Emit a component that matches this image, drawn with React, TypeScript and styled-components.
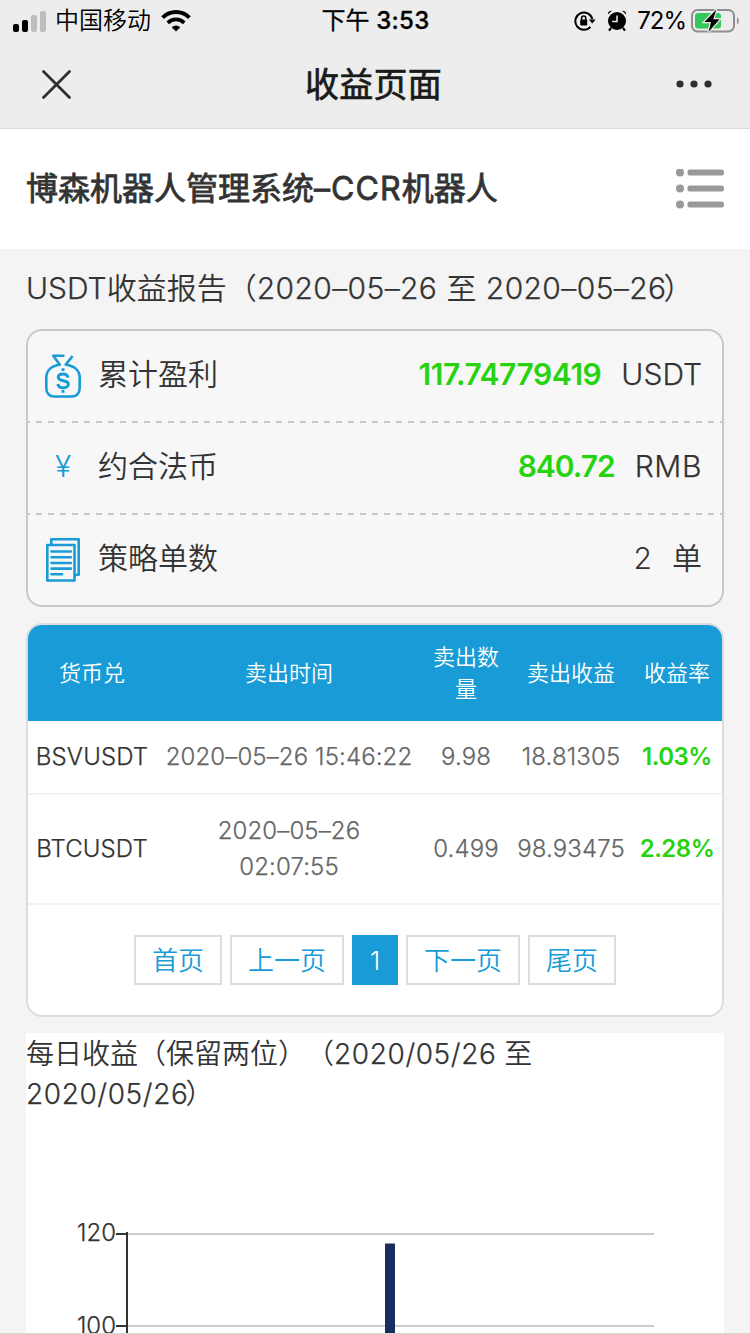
import React from "react";
import styled, { createGlobalStyle } from "styled-components";

const BLUE = "#189bd6";
const GREEN = "#27d30f";

const GlobalStyle = createGlobalStyle`
  * { box-sizing: border-box; }
  body {
    margin: 0;
    background: #f4f4f4;
    color: #333;
    font-family: Inter, "Noto Sans CJK SC", sans-serif;
    font-weight: 350;
    text-spacing-trim: space-all;
  }
`;

const Screen = styled.div`
  width: 750px;
  height: 1334px;
  overflow: hidden;
  display: flex;
  flex-direction: column;
  border-bottom: 1px solid #d6d6d6;
`;

/* A run of latin letters or digits with its own tracking. */
const Latin = styled.span<{ $track?: number }>`
  letter-spacing: ${(p) => p.$track ?? 0}px;
  -webkit-text-stroke: 0.25px currentColor;
`;

const ClosingParen = styled.span`
  margin-left: -3px;
`;

const TopBars = styled.header`
  flex: none;
  height: 129px;
  background: #ededed;
  border-bottom: 1px solid #d9d9d9;
`;

const StatusBar = styled.div`
  height: 40px;
  padding: 1px 11px 0 13px;
  display: grid;
  grid-template-columns: 1fr auto 1fr;
  align-items: center;
  color: #000;
  font-size: 24px;
  line-height: 39px;
`;

const StatusGroup = styled.div<{ $end?: boolean }>`
  display: flex;
  align-items: center;
  justify-content: ${(p) => (p.$end ? "flex-end" : "flex-start")};
  white-space: nowrap;
`;

const Carrier = styled.span`
  margin: 0 10px 0 8px;
`;

const Clock = styled.span`
  margin-right: 1px;
  font-weight: 400;
  white-space: nowrap;
  -webkit-text-stroke: 0.3px currentColor;
`;

const ClockDigits = styled.span`
  font-weight: 500;
  letter-spacing: 0.3px;
`;

const Percent = styled.span`
  margin: 0 5px 0 10px;
  font-weight: 400;
  letter-spacing: -1px;
`;

const NavBar = styled.div`
  height: 88px;
  padding: 0 36px 0 40px;
  display: grid;
  grid-template-columns: 1fr auto 1fr;
  align-items: center;
`;

const NavTitle = styled.h1`
  margin: 0 7px 0 0;
  padding-top: 1px;
  font-size: 34px;
  line-height: 48px;
  font-weight: 400;
  letter-spacing: 0.3px;
  color: #1a1a1a;
  -webkit-text-stroke: 0.7px currentColor;
`;

const NavEnd = styled.div`
  display: flex;
  justify-content: flex-end;
`;

const PageHead = styled.section`
  flex: none;
  height: 120px;
  padding: 0 26px;
  display: flex;
  align-items: center;
  justify-content: space-between;
  background: #fff;
`;

const SystemName = styled.h2`
  margin: 0;
  font-size: 32px;
  line-height: 48px;
  font-weight: 400;
  white-space: nowrap;
  -webkit-text-stroke: 0.8px currentColor;
`;

const SystemCode = styled.span`
  letter-spacing: 1.1px;
`;

const Content = styled.main`
  flex: none;
  padding: 0 26px;
  display: flex;
  flex-direction: column;
`;

const ReportTitle = styled.h3`
  margin: 0;
  height: 80px;
  font-size: 30px;
  line-height: 78px;
  font-weight: 350;
  word-spacing: 0.8px;
  white-space: nowrap;
`;

const Summary = styled.ul`
  margin: 0;
  padding: 0;
  list-style: none;
  border: 2px solid #c8c8c8;
  border-radius: 16px;
  background: #f7f7f7;
`;

const SummaryRow = styled.li`
  height: 92px;
  padding: 0 20px 7px 15px;
  display: flex;
  align-items: center;
  font-size: 30px;
  line-height: 80px;
  background: linear-gradient(90deg, #c8c8c8 6px, transparent 6px) -4px 100% / 12px 2px repeat-x;
  &:last-child {
    height: 90px;
    padding-bottom: 5px;
    background: none;
  }
`;

const IconBox = styled.span`
  width: 40px;
  height: 48px;
  margin: 5px 15px 0 0;
  display: flex;
  align-items: center;
  justify-content: center;
`;

const YenSign = styled.span`
  color: ${BLUE};
  font-size: 30px;
  line-height: 44px;
  padding-bottom: 4px;
`;

const Amount = styled.b<{ $plain?: boolean; $track?: number }>`
  margin-left: auto;
  margin-right: 20px;
  font-weight: ${(p) => (p.$plain ? 350 : 600)};
  letter-spacing: ${(p) => p.$track ?? 0}px;
  color: ${(p) => (p.$plain ? "#333" : GREEN)};
`;

const TableCard = styled.section`
  margin-top: 16px;
  border: 2px solid #ddd;
  border-radius: 16px;
  background: #fff;
  overflow: hidden;
`;

const Table = styled.table`
  width: 100%;
  table-layout: fixed;
  border-collapse: separate;
  border-spacing: 0;
  text-align: center;
`;

const HeadCell = styled.th<{ $w: number }>`
  width: ${(p) => p.$w}px;
  height: 96px;
  padding: 0 10px;
  background: ${BLUE};
  color: #fff;
  font-size: 22px;
  line-height: 32px;
  font-weight: 350;
`;

const Cell = styled.td<{ $h: number; $tone?: "name" | "rate" }>`
  height: ${(p) => p.$h}px;
  padding: 0;
  border-bottom: 2px solid #f2f2f2;
  font-size: 24px;
  line-height: 36px;
  letter-spacing: ${(p) => (p.$tone === "rate" ? -0.5 : 0.12)}px;
  white-space: pre-line;
  color: ${(p) => (p.$tone === "rate" ? GREEN : p.$tone === "name" ? "#333" : "#666")};
  font-weight: ${(p) => (p.$tone === "rate" ? 600 : 350)};
  -webkit-text-stroke: ${(p) => (p.$tone === "rate" ? 0 : 0.25)}px currentColor;
`;

const Pager = styled.nav`
  height: 110px;
  display: flex;
  align-items: center;
  justify-content: center;
  gap: 8px;
`;

const PageButton = styled.button<{ $current?: boolean }>`
  height: 50px;
  padding: 2px ${(p) => (p.$current ? 0 : 16)}px 0;
  width: ${(p) => (p.$current ? "46px" : "auto")};
  border: 2px solid ${(p) => (p.$current ? BLUE : "#ddd")};
  background: ${(p) => (p.$current ? BLUE : "#fff")};
  color: ${(p) => (p.$current ? "#fff" : BLUE)};
  font: inherit;
  font-size: 26px;
  line-height: 44px;
`;

const ChartCard = styled.section`
  margin-top: 16px;
  height: 320px;
  background: #fff;
`;

const ChartTitle = styled.h3`
  margin: 0;
  padding-top: 1px;
  height: 80px;
  font-size: 28px;
  line-height: 40px;
  font-weight: 350;
`;

const Chart = styled.svg`
  display: block;
  text { font-size: 24px; fill: #333; stroke: #333; stroke-width: 0.25px; }
`;

function SignalIcon() {
  return (
    <svg width="34" height="22" viewBox="0 0 34 22">
      <rect x="0" y="14" width="6" height="8" rx="2" />
      <rect x="9" y="10" width="6" height="12" rx="2" />
      <rect x="18" y="5" width="6" height="17" rx="2" fill="#bdbdbd" />
      <rect x="27" y="1" width="6" height="21" rx="2" fill="#bdbdbd" />
    </svg>
  );
}

function WifiIcon() {
  return (
    <svg width="30" height="22" viewBox="0 0 30 22" fill="none" stroke="#000">
      <path d="M1.6 7.6a19 19 0 0 1 26.8 0" strokeWidth="4" />
      <path d="M6.8 12.8a11.6 11.6 0 0 1 16.4 0" strokeWidth="3.8" />
      <path d="M15 21.6l-4.3-4.3a6.1 6.1 0 0 1 8.6 0z" fill="#000" stroke="none" />
    </svg>
  );
}

function RotationLockIcon() {
  return (
    <svg width="22" height="22" viewBox="0 0 22 22" fill="none" stroke="#000">
      <path d="M16.4 16.8A8.6 8.6 0 1 1 18.3 9" strokeWidth="2" />
      <path d="M14.8 9.4h6.8l-3.400 4z" fill="#000" stroke="none" />
      <rect x="6.2" y="9.6" width="7" height="5.8" rx="1" fill="#000" stroke="none" />
      <path d="M7.6 10V8.2a2.1 2.1 0 0 1 4.2 0V10" strokeWidth="1.5" />
    </svg>
  );
}

const AlarmSvg = styled.svg`
  margin-left: 11px;
`;

function AlarmIcon() {
  return (
    <AlarmSvg width="20" height="22" viewBox="0 0 20 22">
      <circle cx="10" cy="11" r="9" />
      <path d="M0.800 4.400A3.600 3.600 0 0 1 5 0.800zM19.200 4.400A3.600 3.600 0 0 0 15 0.800z" />
      <path d="M4 18l-2 2.600M16 18l2 2.600" stroke="#000" strokeWidth="2.200" />
      <path d="M10 5.600v6H5.200" fill="none" stroke="#ededed" strokeWidth="1.500" />
    </AlarmSvg>
  );
}

function BatteryIcon() {
  return (
    <svg width="48" height="24" viewBox="0 0 48 24">
      <rect x="1" y="1" width="42" height="21.4" rx="5.5" fill="none" stroke="#8e8e8e" strokeWidth="2" />
      <path d="M46 8.2c2.4 1 2.4 6 0 7z" fill="#8e8e8e" />
      <rect x="4" y="4" width="26" height="15.4" rx="3" fill="#34c759" />
      <path d="M25.4 0.4L13.400 13h6.600l-2.500 10L28.600 10.200h-6.400z" fill="#000" stroke="#ededed" strokeWidth="2.400" paintOrder="stroke" />
    </svg>
  );
}

function CloseIcon() {
  return (
    <svg width="33" height="33" viewBox="0 0 33 33" stroke="#2e2e2e" strokeWidth="2.8" strokeLinecap="round">
      <path d="M3.5 3.500l26 26M29.500 3.500l-26 26" />
    </svg>
  );
}

function MoreIcon() {
  return (
    <svg width="38" height="8" viewBox="0 0 38 8" fill="#2e2e2e">
      <circle cx="4" cy="4" r="3.6" />
      <circle cx="18" cy="4" r="3.6" />
      <circle cx="32" cy="4" r="3.6" />
    </svg>
  );
}

function ListIcon() {
  return (
    <svg width="48" height="40" viewBox="0 0 48 40" fill="#999">
      {[3.5, 19.5, 35.500].map((y) => (
        <React.Fragment key={y}>
          <circle cx="4" cy={y} r="4" />
          <rect x="11.500" y={y - 3} width="36.500" height="6" rx="2.600" />
        </React.Fragment>
      ))}
    </svg>
  );
}

function MoneyBagIcon() {
  return (
    <svg width="38" height="46" viewBox="0 0 38 46" fill="none" stroke={BLUE} strokeWidth="2.600" strokeLinejoin="round">
      <path d="M20.500 2.800H9.200l6.500 8.800C7.600 12.800 2.300 17.600 2.300 24.500V35c0 5.400 3.200 8.500 8 8.500h17.400c4.800 0 8-3.100 8-8.500V24.500c0-6.900-5.300-11.700-14-12.900L28.600 3" />
      <path d="M24 24.600c-.5-2.600-2.400-3.600-5-3.600-2.800 0-4.700 1.300-4.700 3.300 0 5 10.100 2 10.100 7 0 2.100-2.200 3.500-5.200 3.500-3 0-5-1.200-5.300-3.900" strokeWidth="3" />
      <path d="M19 15.200v2.800M19 37v2.800" strokeWidth="3" />
    </svg>
  );
}

function OrdersIcon() {
  return (
    <svg width="36" height="46" viewBox="0 0 36 46" fill="none" stroke={BLUE} strokeWidth="2.600" strokeLinecap="round" strokeLinejoin="round">
      <path d="M6.300 7V2.300h27.400v35.400H31" />
      <path d="M2.300 8h27.200v35.500H2.300z" />
      <path d="M6.500 14.500h19.300M6.500 20.300h19.300M6.500 26h19.300M6.500 31.600h19.300M6.500 37.200h10.500" />
    </svg>
  );
}

const columns = [
  { label: "货币兑", w: 128 },
  { label: "卖出时间", w: 266 },
  { label: "卖出数量", w: 88 },
  { label: "卖出收益", w: 122 },
  { label: "收益率", w: 90 },
];

const trades = [
  { h: 74, pair: "BSVUSDT", time: "2020–05–26 15:46:22", qty: "9.98", profit: "18.81305", rate: "1.03%" },
  { h: 110, pair: "BTCUSDT", time: "2020–05–26\n02:07:55", qty: "0.499", profit: "98.93475", rate: "2.28%" },
];

const pages = ["首页", "上一页", "1", "下一页", "尾页"];

export default function App() {
  return (
    <Screen>
      <GlobalStyle />
      <TopBars>
        <StatusBar>
          <StatusGroup>
            <SignalIcon />
            <Carrier>中国移动</Carrier>
            <WifiIcon />
          </StatusGroup>
          <Clock>下午 <ClockDigits>3:53</ClockDigits></Clock>
          <StatusGroup $end>
            <RotationLockIcon />
            <AlarmIcon />
            <Percent>72%</Percent>
            <BatteryIcon />
          </StatusGroup>
        </StatusBar>
        <NavBar>
          <CloseIcon />
          <NavTitle>收益页面</NavTitle>
          <NavEnd>
            <MoreIcon />
          </NavEnd>
        </NavBar>
      </TopBars>

      <PageHead>
        <SystemName>
          博森机器人管理系统<SystemCode>–CCR</SystemCode>机器人
        </SystemName>
        <ListIcon />
      </PageHead>

      <Content>
        <ReportTitle>
          <Latin>USDT</Latin>收益报告（<Latin $track={0.4}>2020–05–26</Latin> 至 <Latin $track={0.4}>2020–05–26</Latin>
          <ClosingParen>）</ClosingParen>
        </ReportTitle>

        <Summary>
          <SummaryRow>
            <IconBox><MoneyBagIcon /></IconBox>
            累计盈利
            <Amount $track={-0.45}>117.74779419</Amount>
            <Latin>USDT</Latin>
          </SummaryRow>
          <SummaryRow>
            <IconBox><YenSign>¥</YenSign></IconBox>
            约合法币
            <Amount $track={-1}>840.72</Amount>
            <Latin $track={0.6}>RMB</Latin>
          </SummaryRow>
          <SummaryRow>
            <IconBox><OrdersIcon /></IconBox>
            策略单数
            <Amount $plain>2</Amount>
            单
          </SummaryRow>
        </Summary>

        <TableCard>
          <Table>
            <thead>
              <tr>
                {columns.map((c) => (
                  <HeadCell key={c.label} $w={c.w}>{c.label}</HeadCell>
                ))}
              </tr>
            </thead>
            <tbody>
              {trades.map((t) => (
                <tr key={t.pair}>
                  <Cell $h={t.h} $tone="name">{t.pair}</Cell>
                  <Cell $h={t.h}>{t.time}</Cell>
                  <Cell $h={t.h}>{t.qty}</Cell>
                  <Cell $h={t.h}>{t.profit}</Cell>
                  <Cell $h={t.h} $tone="rate">{t.rate}</Cell>
                </tr>
              ))}
            </tbody>
          </Table>
          <Pager>
            {pages.map((p) => (
              <PageButton key={p} $current={p === "1"}>{p}</PageButton>
            ))}
          </Pager>
        </TableCard>

        <ChartCard>
          <ChartTitle>
            每日收益（保留两位）（<Latin $track={0.6}>2020/05/26</Latin> 至<br />
            <Latin $track={0.6}>2020/05/26</Latin>
            <ClosingParen>）</ClosingParen>
          </ChartTitle>
          <Chart width="698" height="240" viewBox="0 0 698 240">
            <path d="M102 121H628M102 213H628" stroke="#ccc" strokeWidth="2" />
            <path d="M90 121H102M90 213H102M101 119V240" stroke="#333" strokeWidth="2" />
            <rect x="359" y="130.500" width="10" height="110" fill="#1b2c5f" />
            <text x="90" y="128" textAnchor="end">120</text>
            <text x="90" y="221" textAnchor="end">100</text>
          </Chart>
        </ChartCard>
      </Content>
    </Screen>
  );
}
